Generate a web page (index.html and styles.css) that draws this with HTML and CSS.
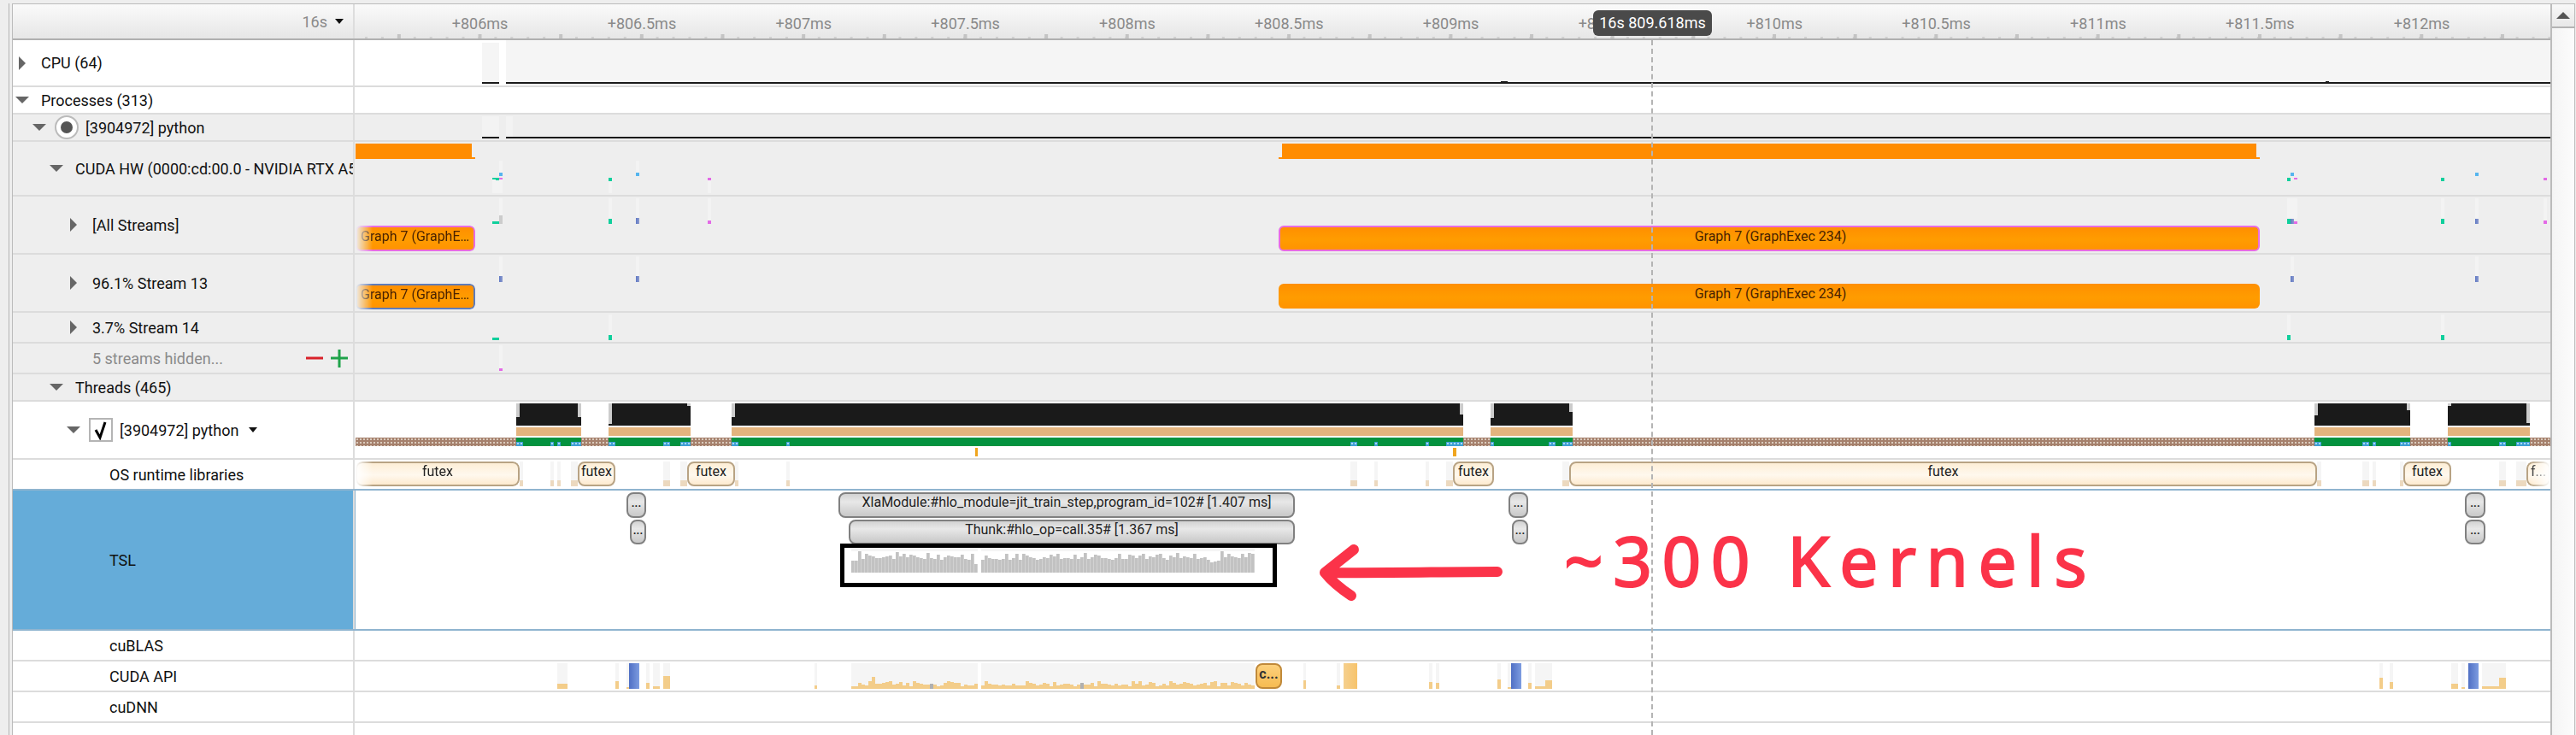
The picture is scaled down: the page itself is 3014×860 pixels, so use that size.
FILE: index.html
```html
<!DOCTYPE html>
<html>
<head lang="en">
    <meta charset="UTF-8">
    <title>Trace timeline</title>
    <link rel="stylesheet" href="styles.css">
</head>
<body>
<div class="shell">
    <div class="view">
        <div class="main">
            <div class="row head">
                <div class="name head-name"><span>16s</span><i class="tri-down small"></i></div>
                <div class="track ruler" id="ruler"></div>
            </div>

            <div class="row h-cpu">
                <div class="name"><span class="twist"><i class="tri-right"></i></span>CPU (64)</div>
                <div class="track" id="t-cpu"></div>
            </div>
            <div class="row h-32">
                <div class="name"><span class="twist"><i class="tri-down"></i></span>Processes (313)</div>
                <div class="track"></div>
            </div>
            <div class="row h-32 grp">
                <div class="name lv1"><span class="twist"><i class="tri-down"></i></span><span class="radio"></span>[3904972] python</div>
                <div class="track" id="t-proc"></div>
            </div>
            <div class="row h-64 grp">
                <div class="name lv2"><span class="twist"><i class="tri-down"></i></span>CUDA HW (0000:cd:00.0 - NVIDIA RTX A5000 Generation)</div>
                <div class="track" id="t-hw"></div>
            </div>
            <div class="row h-68 grp">
                <div class="name lv3"><span class="twist"><i class="tri-right"></i></span>[All Streams]</div>
                <div class="track" id="t-all"></div>
            </div>
            <div class="row h-68 grp">
                <div class="name lv3"><span class="twist"><i class="tri-right"></i></span>96.1% Stream 13</div>
                <div class="track" id="t-s13"></div>
            </div>
            <div class="row h-36 grp">
                <div class="name lv3"><span class="twist"><i class="tri-right"></i></span>3.7% Stream 14</div>
                <div class="track" id="t-s14"></div>
            </div>
            <div class="row h-36 grp">
                <div class="name lv3b hidden-note">5 streams hidden...
                    <svg class="pm" width="50" height="22" viewBox="0 0 50 22">
                        <path d="M0 11H20" stroke="#d9222a" stroke-width="3"/>
                        <path d="M29 11H49M39 1V22" stroke="#1fa34a" stroke-width="3" fill="none"/>
                    </svg>
                </div>
                <div class="track" id="t-hid"></div>
            </div>
            <div class="row h-32 grp">
                <div class="name lv2"><span class="twist"><i class="tri-down"></i></span>Threads (465)</div>
                <div class="track"></div>
            </div>
            <div class="row h-68">
                <div class="name lv3"><span class="twist"><i class="tri-down"></i></span>
                    <span class="check"><svg width="24" height="24" viewBox="0 0 24 24"><path d="M6 12L11 21L17 3" stroke="#000" stroke-width="3" fill="none"/></svg></span>[3904972] python<i class="tri-down small after"></i>
                </div>
                <div class="track" id="t-thread"></div>
            </div>
            <div class="row h-36 before-sel">
                <div class="name lib">OS runtime libraries</div>
                <div class="track" id="t-os"></div>
            </div>
            <div class="row h-164 sel">
                <div class="name lib">TSL</div>
                <div class="track" id="t-tsl">
                    <svg class="arrow" width="220" height="70" viewBox="0 0 220 70">
                        <path d="M214 39C150 39 80 41 12 40M12 40L46 13M12 40C20 50 31 59 43 67" stroke="#fb3349" stroke-width="12" stroke-linecap="round" stroke-linejoin="round" fill="none"/>
                    </svg>
                    <span class="note">~300 Kernels</span>
                </div>
            </div>
            <div class="row h-36">
                <div class="name lib">cuBLAS</div>
                <div class="track"></div>
            </div>
            <div class="row h-36">
                <div class="name lib">CUDA API</div>
                <div class="track" id="t-api"></div>
            </div>
            <div class="row h-36">
                <div class="name lib">cuDNN</div>
                <div class="track"></div>
            </div>
            <div class="row filler">
                <div class="name"></div>
                <div class="track"></div>
            </div>

            <div class="cursor"></div>
            <div class="cursor-label">16s 809.618ms</div>
        </div>
        <div class="scroll">
            <div class="scroll-btn"><i class="tri-up"></i></div>
        </div>
    </div>
</div>
<script src="script.js"></script>
</body>
</html>
```
FILE: styles.css
```css
*{
    margin: 0;
    padding: 0;
    box-sizing: border-box;
}
body{
    height: 860px;
    overflow: hidden;
    background-color: #eee;
    font-family: Roboto, "Liberation Sans", sans-serif;
    font-size: 18px;
    color: #111;
}
.shell{
    height: 860px;
    margin-left: 10px;
    padding-left: 3px;
    border-left: 1px solid #b4b4b4;
}
.view{
    height: 856px;
    margin: 4px 1px 0 0;
    display: flex;
    border: 1px solid #bbb;
    border-bottom: 0;
}
.main{
    flex: 1;
    min-width: 0;
    position: relative;
    display: flex;
    flex-direction: column;
    background-color: #fff;
}
.scroll{
    width: 28px;
    border-left: 2px solid #bbb;
    background: linear-gradient(90deg, #f4f4f4, #fcfcfc);
}
.scroll-btn{
    height: 28px;
    display: flex;
    align-items: center;
    justify-content: center;
    border-bottom: 2px solid #b4b4b4;
    background: linear-gradient(#f8f8f8, #e8e8e8);
}

/* rows */
.row{
    display: flex;
    flex: none;
    border-bottom: 2px solid #dcdcdc;
}
.h-cpu{ height: 55px; }
.h-32{ height: 32px; }
.h-36{ height: 36px; }
.h-64{ height: 64px; }
.h-68{ height: 68px; }
.h-164{ height: 164px; }
.grp{ background-color: #eee; }
.filler{
    flex: 1;
    border-bottom: 0;
}
.before-sel,.sel{ border-bottom-color: #8fb4cf; }
.sel .name{ background-color: #65acd9; }
.sel .track{ box-shadow: inset 1px 0 #8fb4cf; }

.name{
    width: 400px;
    flex: none;
    display: flex;
    align-items: center;
    overflow: hidden;
    white-space: nowrap;
    border-right: 2px solid #ddd;
}
.lv1{ padding-left: 20px; }
.lv2{ padding-left: 40px; }
.lv3{ padding-left: 60px; }
.lv3b{ padding-left: 93px; }
.lib{ padding-left: 113px; }
.hidden-note{ color: #8a8a8a; }
.pm{
    margin-left: auto;
    margin-right: 5px;
}
.twist{
    width: 22px;
    flex: none;
    margin-right: 11px;
    display: flex;
    justify-content: center;
}
.tri-right{
    width: 0;
    height: 0;
    border-left: 8px solid #666;
    border-top: 8px solid transparent;
    border-bottom: 8px solid transparent;
}
.tri-down{
    width: 0;
    height: 0;
    border-top: 8px solid #666;
    border-left: 8px solid transparent;
    border-right: 8px solid transparent;
}
.tri-down.small{
    border-top: 6px solid #111;
    border-left-width: 5px;
    border-right-width: 5px;
}
.tri-down.after{ margin-left: 12px; }
.tri-up{
    width: 0;
    height: 0;
    border-bottom: 8px solid #555;
    border-left: 8px solid transparent;
    border-right: 8px solid transparent;
}
.radio{
    width: 28px;
    height: 28px;
    margin: 0 8px 0 -4px;
    flex: none;
    display: flex;
    align-items: center;
    justify-content: center;
    border: 2px solid #bbb;
    border-radius: 50%;
    background-color: #fff;
}
.radio::after{
    content: "";
    width: 14px;
    height: 14px;
    border-radius: 50%;
    background-color: #555;
}
.check{
    width: 28px;
    height: 28px;
    margin: 0 8px 0 -4px;
    flex: none;
    display: flex;
    align-items: center;
    justify-content: center;
    border: 2px solid #b4b4b4;
    background-color: #fff;
}

/* header */
.head{
    height: 42px;
    border-bottom: 2px solid #b0b0b0;
    background: linear-gradient(#fafafa, #e6e6e6);
}
.head-name{
    justify-content: flex-end;
    gap: 9px;
    padding-right: 11px;
    color: #8a8a8a;
}
.ruler{
    background:
        linear-gradient(90deg, #c4c4c4 4px, transparent 4px) 49.9px 100% / 94.667px 5px repeat-x,
        linear-gradient(90deg, #d0d0d0 3px, transparent 3px) 12px 100% / 18.933px 2px repeat-x;
}
.tick-label{
    position: absolute;
    top: 12px;
    transform: translateX(-50%);
    color: #8a8a8a;
    white-space: nowrap;
}

/* canvas */
.track{
    flex: 1;
    min-width: 0;
    position: relative;
}
.ev{
    position: absolute;
    white-space: nowrap;
    overflow: hidden;
    text-overflow: ellipsis;
    text-align: center;
}
.sheet{ background-color: #f5f5f5; }
.pale{ background-color: #f3f3f3; }
.ink{ background-color: #1a1a1a; }
.gray{ background-color: #ccc; }
.hw{ background-color: #ff8c00; }
.teal{ background-color: #10cf9c; }
.blue{ background-color: #55b5ee; }
.pink{ background-color: #e36ae6; }
.indigo{ background: linear-gradient(90deg, #5f78c4, #8d9cce); }
.tan{ background-color: #e3b47e; }
.green{ background-color: #03923f; }
.speck{ background: radial-gradient(circle, #a7d8f0 1px, #3f9fd4 1.3px) 0 0 / 4px 4px; }
.state{ background: radial-gradient(circle, #d9cabc 1px, transparent 1.2px) 0 0 / 4px 4px, #a5806c; }
.mark{ background-color: #f0a51e; }
.crumb{ background-color: #ecd9bf; }
.bar-api{ background-color: #f3cd8a; }
.bar-tsl{ background-color: #c2c2c2; border-right: 1px solid #d2d2d2; }
.bar-grey{ background-color: #b0b0b0; }
.bar-full{ background: linear-gradient(90deg, #f5d08e, #f7c36b); }
.bar-cold{ background: linear-gradient(90deg, #4f6fc4, #7d9ce0); }

.graph{
    padding: 0 1px 0 4px;
    line-height: 24px;
    font-size: 16px;
    color: #4a2300;
    border-radius: 6px;
    background: linear-gradient(#ff8f00, #ff9c00 55%, #ff9300);
}
.graph.magenta{
    line-height: 22px;
    border: 2px solid #e86be0;
}
.graph.slate{
    line-height: 22px;
    border: 2px solid #5f7bb8;
}
.futex{
    line-height: 20px;
    font-size: 16px;
    color: #222;
    border: 2px solid #b8a384;
    border-radius: 8px;
    background: linear-gradient(#fdeed6, #fff8ee 55%, #fdeacf);
}
.faded{ -webkit-mask-image: linear-gradient(90deg, transparent, #000 20px); mask-image: linear-gradient(90deg, transparent, #000 20px); }
.faded-r{ -webkit-mask-image: linear-gradient(270deg, transparent, #000 24px); mask-image: linear-gradient(270deg, transparent, #000 24px); }
.slice{
    line-height: 20px;
    font-size: 16px;
    color: #222;
    border: 2px solid #808080;
    border-radius: 8px;
    background: linear-gradient(#d2d2d2, #e8e8e8 35%, #c8c8c8);
}
.slice.tiny{
    font-size: 13px;
    font-weight: bold;
    overflow: visible;
    line-height: 22px;
}
.amber{
    line-height: 22px;
    font-size: 16px;
    font-weight: bold;
    color: #333;
    border: 2px solid #c0893a;
    border-radius: 8px;
    background: linear-gradient(#fcd07c, #f6bb52);
}
.box{
    border: 5px solid #000;
}
.arrow{
    position: absolute;
    left: 1123px;
    top: 56px;
    overflow: visible;
}
.note{
    position: absolute;
    left: 1415px;
    top: 26px;
    font-family: "Noto Sans", sans-serif;
    font-size: 80px;
    line-height: 110px;
    letter-spacing: 11.5px;
    -webkit-text-stroke: 2px #fb3349;
    color: #fb3349;
    white-space: nowrap;
}

.cursor{
    position: absolute;
    left: 1917px;
    top: 42px;
    bottom: 0;
    border-left: 2px dashed #b4b4b4;
    z-index: 5;
}
.cursor-label{
    position: absolute;
    left: 1849px;
    top: 7px;
    width: 139px;
    height: 30px;
    line-height: 29px;
    text-align: center;
    color: #fff;
    background-color: #4a4a4a;
    border-radius: 6px;
    z-index: 6;
}
```
FILE: script.js
```js
// every x and y below is read off the page, addEv makes them relative to the track
function addEv(id, cls, x1, y1, x2, y2, text) {
    var oTrack = document.getElementById(id);
    var rect = oTrack.getBoundingClientRect();
    var oEv = document.createElement("div");
    oEv.className = "ev " + cls;
    oEv.style.left = (x1 - rect.left) + "px";
    oEv.style.top = (y1 - rect.top) + "px";
    oEv.style.width = (x2 - x1) + "px";
    oEv.style.height = (y2 - y1) + "px";
    if (text) oEv.textContent = text;
    oTrack.insertBefore(oEv, oTrack.firstChild);
}
// insertBefore puts new ones under old ones, so lists go top layer first
function addAll(id, list) {
    for (var i = 0; i < list.length; i++) {
        var e = list[i];
        addEv(id, e[0], e[1], e[2], e[3], e[4], e[5]);
    }
}

// ruler labels
var oRuler = document.getElementById("ruler");
for (var k = 0; k <= 12; k++) {
    var oLabel = document.createElement("span");
    oLabel.className = "tick-label";
    oLabel.textContent = "+" + (806 + k / 2) + "ms";
    oLabel.style.left = (146.6 + k * 189.33) + "px";
    oRuler.appendChild(oLabel);
}

addAll("t-cpu", [
    ["ink", 564, 96, 584, 98], ["ink", 592, 96, 2984, 98],
    ["ink", 1756, 95, 1764, 96], ["ink", 2721, 95, 2725, 96],
    ["sheet", 564, 50, 584, 96], ["sheet", 592, 47, 2984, 96]
]);
addAll("t-proc", [
    ["ink", 564, 160, 584, 162], ["ink", 592, 160, 2984, 162],
    ["pale", 564, 136, 584, 160], ["pale", 592, 136, 600, 160]
]);

addAll("t-hw", [
    ["hw", 416, 168, 552, 186], ["hw", 552, 184, 556, 186],
    ["hw", 1500, 168, 2640, 186], ["hw", 1496, 184, 1500, 186], ["hw", 2640, 184, 2644, 186],
    ["teal", 576, 208, 584, 210], ["teal", 580, 210, 584, 211], ["blue", 584, 202, 588, 206], ["pink", 584, 208, 588, 210],
    ["teal", 712, 208, 716, 212], ["blue", 744, 202, 748, 206], ["pink", 828, 208, 832, 211],
    ["teal", 2676, 208, 2680, 212], ["blue", 2680, 202, 2684, 206], ["pink", 2684, 208, 2688, 210],
    ["teal", 2856, 208, 2860, 212], ["blue", 2896, 202, 2900, 206], ["pink", 2976, 208, 2980, 211],
    ["pale", 576, 210, 588, 226], ["pale", 584, 188, 588, 202], ["pale", 712, 212, 716, 226], ["pale", 744, 188, 748, 202], ["pale", 828, 211, 832, 226]
]);

addAll("t-all", [
    ["graph magenta faded", 416, 264, 556, 294, "Graph 7 (GraphExec 234)"],
    ["graph magenta", 1496, 264, 2644, 294, "Graph 7 (GraphExec 234)"],
    ["teal", 576, 259, 584, 262], ["gray", 584, 252, 588, 262],
    ["teal", 712, 256, 716, 262], ["indigo", 744, 255, 748, 262], ["pink", 828, 258, 832, 262],
    ["teal", 2676, 256, 2680, 262], ["indigo", 2680, 256, 2684, 262], ["pink", 2684, 259, 2688, 262],
    ["teal", 2856, 256, 2860, 262], ["indigo", 2896, 256, 2900, 262], ["pink", 2976, 258, 2980, 262],
    ["pale", 584, 232, 588, 252], ["pale", 712, 232, 716, 256], ["pale", 744, 232, 748, 255], ["pale", 828, 232, 832, 258],
    ["pale", 2676, 232, 2688, 256], ["pale", 2856, 232, 2860, 256], ["pale", 2896, 232, 2900, 256], ["pale", 2976, 232, 2980, 258]
]);

addAll("t-s13", [
    ["graph slate faded", 416, 332, 556, 362, "Graph 7 (GraphExec 234)"],
    ["graph", 1496, 332, 2644, 361, "Graph 7 (GraphExec 234)"],
    ["indigo", 584, 323, 588, 330], ["indigo", 744, 323, 748, 330],
    ["indigo", 2680, 323, 2684, 330], ["indigo", 2896, 323, 2900, 330],
    ["pale", 584, 300, 588, 323], ["pale", 744, 300, 748, 323], ["pale", 2680, 300, 2684, 323], ["pale", 2896, 300, 2900, 323]
]);

addAll("t-s14", [
    ["teal", 576, 395, 584, 398], ["teal", 712, 392, 716, 398],
    ["teal", 2676, 392, 2680, 398], ["teal", 2856, 392, 2860, 398],
    ["pale", 712, 368, 716, 392], ["pale", 2676, 368, 2680, 392], ["pale", 2856, 368, 2860, 392]
]);
addAll("t-hid", [
    ["pink", 584, 431, 588, 434], ["pale", 584, 404, 588, 431]
]);

// thread row: black + tan + green blocks over the dotted state bar
var blocks = [[604, 680], [712, 808], [856, 1712], [1744, 1840], [2708, 2820], [2864, 2960]];
var corners = [
    [604, 608, 488], [676, 680, 488], [712, 716, 496], [804, 808, 475], [856, 860, 488],
    [1708, 1712, 485], [1744, 1748, 489], [1836, 1840, 482], [2708, 2712, 486], [2816, 2820, 480],
    [2864, 2868, 475], [2956, 2960, 495]
];
var specks = [
    [604, 612], [644, 648], [652, 656], [668, 680], [712, 720], [776, 784], [796, 808], [856, 864],
    [920, 924], [1580, 1588], [1608, 1612], [1668, 1672], [1692, 1712], [1744, 1748], [1812, 1820],
    [1828, 1840], [2708, 2716], [2764, 2772], [2776, 2780], [2808, 2820], [2864, 2868], [2924, 2932], [2944, 2960]
];
var i;
for (i = 0; i < corners.length; i++) {
    addEv("t-thread", "gray", corners[i][0], 472, corners[i][1], corners[i][2]);
}
for (i = 0; i < specks.length; i++) {
    addEv("t-thread", "speck", specks[i][0], 517, specks[i][1], 522);
}
for (i = 0; i < blocks.length; i++) {
    addEv("t-thread", "ink", blocks[i][0], 472, blocks[i][1], 498);
    addEv("t-thread", "tan", blocks[i][0], 500, blocks[i][1], 510);
    addEv("t-thread", "green", blocks[i][0], 512, blocks[i][1], 522);
}
addAll("t-thread", [
    ["state", 416, 512, 2984, 522],
    ["mark", 1141, 524, 1144, 534], ["mark", 1700, 524, 1704, 534]
]);

addAll("t-os", [
    ["futex faded", 416, 540, 608, 569, "futex"],
    ["futex", 676, 540, 720, 569, "futex"],
    ["futex", 804, 540, 860, 569, "futex"],
    ["futex", 1700, 540, 1748, 569, "futex"],
    ["futex", 1836, 540, 2711, 569, "futex"],
    ["futex", 2812, 540, 2868, 569, "futex"],
    ["futex faded-r", 2956, 540, 2984, 569, "f..."]
]);
var osMarks = [
    [608, 612], [644, 648], [652, 656], [668, 676], [776, 784], [796, 804], [860, 864], [920, 924],
    [1580, 1588], [1608, 1612], [1668, 1672], [1692, 1700], [1828, 1836], [2711, 2716], [2764, 2772],
    [2776, 2780], [2808, 2812], [2924, 2932], [2944, 2956]
];
for (i = 0; i < osMarks.length; i++) {
    addEv("t-os", "crumb", osMarks[i][0], 562, osMarks[i][1], 569);
    addEv("t-os", "sheet", osMarks[i][0], 540, osMarks[i][1], 562);
}

// the ~300 kernels, 4px a bar, both groups
var tsl = [14,14,25,16,22,20,19,17,17,18,19,20,16,24,19,22,18,21,20,18,17,16,23,17,16,21,15,18,20,19,18,18,21,16,15,22,10];
var tsl2 = [15,20,17,16,16,15,16,22,15,17,22,15,22,20,18,17,15,16,18,17,21,19,22,16,17,17,16,21,16,18,23,16,18,21,20,17,17,16,15,17,22,16,16,21,20,17,20,22,16,19,18,21,22,17,15,20,18,23,17,19,18,17,22,16,17,18,15,12,13,14,25,18,22,19,18,17,22,18,23,22];
function addGroup(x0, heights) {
    for (var j = 0; j < heights.length; j++) {
        addEv("t-tsl", "bar-tsl", x0 + j * 4, 670 - heights[j], x0 + j * 4 + 4, 670);
        var h = heights[j] % 7 + 3;
        if (j == 6 && x0 < 1000) h = 14;
        addEv("t-api", (j == 23 && x0 < 1000) || (j == 29 && x0 > 1000) ? "bar-grey" : "bar-api", x0 + j * 4, 806 - h, x0 + j * 4 + 4, 806);
    }
}
addAll("t-tsl", [
    ["box", 983, 636, 1494, 687],
    ["slice", 981, 576, 1515, 606, "XlaModule:#hlo_module=jit_train_step,program_id=102# [1.407 ms]"],
    ["slice", 993, 608, 1515, 637, "Thunk:#hlo_op=call.35# [1.367 ms]"],
    ["slice tiny", 733, 576, 756, 606, "..."], ["slice tiny", 737, 608, 756, 637, "..."],
    ["slice tiny", 1765, 576, 1788, 606, "..."], ["slice tiny", 1769, 608, 1788, 637, "..."],
    ["slice tiny", 2884, 576, 2908, 606, "..."], ["slice tiny", 2884, 608, 2908, 637, "..."]
]);
addGroup(996, tsl);
addGroup(1148, tsl2);
addEv("t-tsl", "sheet", 996, 642, 1144, 645);
addEv("t-tsl", "sheet", 1148, 642, 1468, 645);

addAll("t-api", [
    ["amber", 1469, 776, 1500, 806, "c..."],
    ["bar-cold", 736, 776, 748, 806], ["bar-cold", 1768, 776, 1780, 806], ["bar-cold", 2888, 776, 2900, 806],
    ["bar-full", 1572, 776, 1588, 806]
]);
var apiBars = [
    [652, 664, 800], [720, 724, 797], [733, 736, 804], [756, 760, 799], [764, 772, 803], [776, 784, 791],
    [953, 956, 802], [1525, 1528, 796], [1564, 1568, 802], [1672, 1676, 798], [1680, 1684, 799],
    [1752, 1756, 795], [1764, 1768, 804], [1788, 1792, 799], [1796, 1808, 803], [1808, 1816, 796],
    [2784, 2788, 793], [2796, 2800, 798], [2868, 2876, 800], [2880, 2884, 804], [2904, 2924, 803], [2924, 2932, 793]
];
for (i = 0; i < apiBars.length; i++) {
    addEv("t-api", "bar-api", apiBars[i][0], apiBars[i][2], apiBars[i][1], 806);
    addEv("t-api", "sheet", apiBars[i][0], 776, apiBars[i][1], apiBars[i][2]);
}
addEv("t-api", "sheet", 996, 776, 1144, 806);
addEv("t-api", "sheet", 1148, 776, 1468, 806);
```
